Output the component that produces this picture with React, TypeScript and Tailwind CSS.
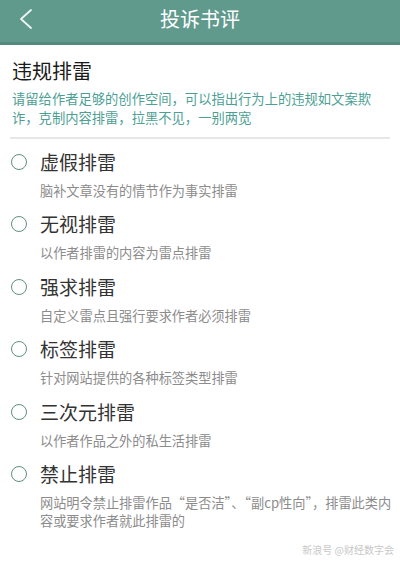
import React from "react";

const items = [
  { t: "虚假排雷", d: "脑补文章没有的情节作为事实排雷" },
  { t: "无视排雷", d: "以作者排雷的内容为雷点排雷" },
  { t: "强求排雷", d: "自定义雷点且强行要求作者必须排雷" },
  { t: "标签排雷", d: "针对网站提供的各种标签类型排雷" },
  { t: "三次元排雷", d: "以作者作品之外的私生活排雷" },
  { t: "禁止排雷", d: "网站明令禁止排雷作品“是否洁”、“副cp性向”，排雷此类内容或要求作者就此排雷的" },
];

export default function App() {
  return (
    <div
      className="w-[400px] h-[565px] bg-white overflow-hidden relative"
      style={{ fontFamily: '"Noto Sans CJK SC", "Noto Sans", sans-serif' }}
    >
      <div className="h-[45px] bg-[#5f9a8d] border-b-[3px] border-[#548a7e] flex items-center relative">
        <svg className="absolute left-[19px] top-[9px]" width="14" height="20" viewBox="0 0 14 20">
          <path d="M12 1 L2 10 L12 19" fill="none" stroke="#eef5f3" strokeWidth="1.8" strokeLinecap="round" strokeLinejoin="round" />
        </svg>
        <div className="w-full text-center text-[20px] leading-[28px] text-white -mt-[5px]">投诉书评</div>
      </div>
      <div className="px-[12px] pt-[12px]">
        <div className="text-[20px] leading-[28px] text-[#1a1a1a]">违规排雷</div>
        <div className="mt-[4px] text-[13.3px] leading-[19px] text-[#4d9f95] pr-[4px]">
          请留给作者足够的创作空间，可以指出行为上的违规如文案欺诈，克制内容排雷，拉黑不见，一别两宽
        </div>
      </div>
      <div className="mx-[10px] mt-[10px] h-[2px] bg-[#e6e6e6]" />
      <div className="pt-[10px] flex flex-col gap-[11.4px]">
        {items.map((it) => (
          <div key={it.t} className="flex flex-col">
            <div className="flex items-center h-[26px]">
              <div className="ml-[11px] w-[16px] h-[16px] rounded-full border-[1.5px] border-[#5e8f86]" />
              <div className="ml-[13px] text-[19px] leading-[26px] text-[#333333]">{it.t}</div>
            </div>
            <div className="mt-[7px] ml-[40px] mr-[1px] text-[13.2px] leading-[18px] text-[#8c8c8c]">{it.d}</div>
          </div>
        ))}
      </div>
      <div className="absolute right-[6px] bottom-[8px] text-[10px] text-[#c8c8c8]">新浪号 @财经数字会</div>
    </div>
  );
}
